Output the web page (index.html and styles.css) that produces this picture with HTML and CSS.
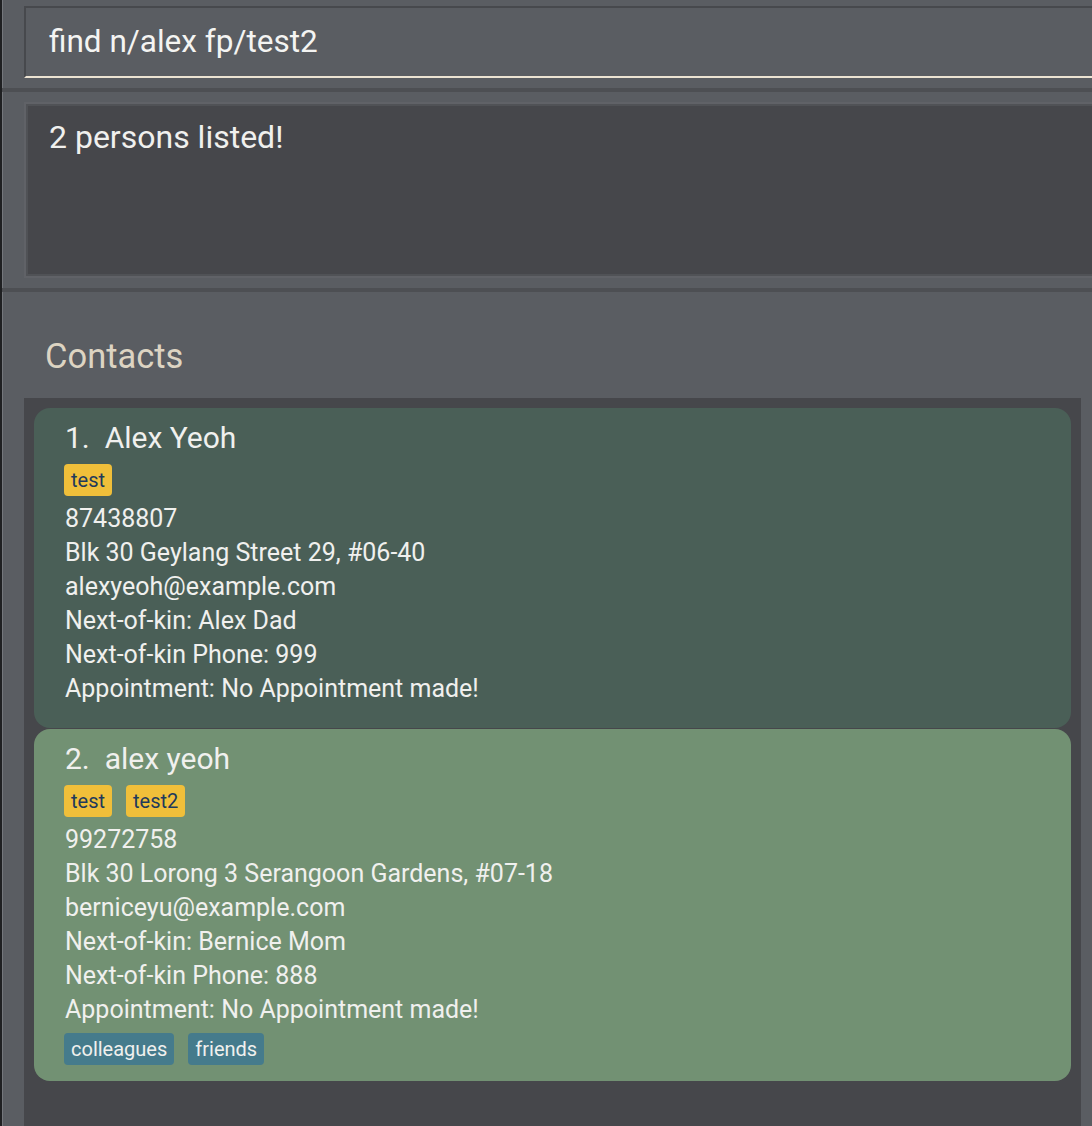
FILE: index.html
```html
<!DOCTYPE html>
<html>
<head>
<meta charset="utf-8">
<link rel="stylesheet" href="styles.css">
</head>
<body>
<div class="window">
  <section class="command-pane">
    <div class="command-box">find n/alex fp/test2</div>
  </section>
  <div class="divider"></div>
  <section class="result-pane">
    <div class="result-box">2 persons listed!</div>
  </section>
  <div class="divider"></div>
  <section class="list-pane">
    <h2 class="list-title">Contacts</h2>
    <div class="list">
      <div class="card card-dark">
        <div class="card-name">1.&nbsp; Alex Yeoh</div>
        <div class="tags">
          <span class="tag tag-yellow">test</span>
        </div>
        <div class="field">87438807</div>
        <div class="field">Blk 30 Geylang Street 29, #06-40</div>
        <div class="field">alexyeoh@example.com</div>
        <div class="field">Next-of-kin: Alex Dad</div>
        <div class="field">Next-of-kin Phone: 999</div>
        <div class="field">Appointment: No Appointment made!</div>
        <div class="tags tags-bottom"></div>
      </div>
      <div class="card card-light">
        <div class="card-name">2.&nbsp; alex yeoh</div>
        <div class="tags">
          <span class="tag tag-yellow">test</span>
          <span class="tag tag-yellow">test2</span>
        </div>
        <div class="field">99272758</div>
        <div class="field">Blk 30 Lorong 3 Serangoon Gardens, #07-18</div>
        <div class="field">berniceyu@example.com</div>
        <div class="field">Next-of-kin: Bernice Mom</div>
        <div class="field">Next-of-kin Phone: 888</div>
        <div class="field">Appointment: No Appointment made!</div>
        <div class="tags tags-bottom">
          <span class="tag tag-blue">colleagues</span>
          <span class="tag tag-blue">friends</span>
        </div>
      </div>
    </div>
  </section>
</div>
</body>
</html>
```

FILE: styles.css
```css
html, body {
  margin: 0;
  padding: 0;
  height: 100%;
  overflow: hidden;
}

body {
  background: #5a5d62;
  font-family: Roboto, "Noto Sans", sans-serif;
  color: #f0f0ee;
}

.window {
  height: 100%;
  display: flex;
  flex-direction: column;
  border-left: 2px solid #1f2022;
  box-shadow: inset 1px 0 0 #74777c;
  box-sizing: border-box;
}

.command-pane {
  padding: 6px 0 10px 22px;
}

.command-box {
  height: 68px;
  border-top: 2px solid #47494d;
  border-left: 2px solid #47494d;
  border-bottom: 2px solid #ece3d2;
  padding-left: 23px;
  font-size: 31.5px;
  line-height: 68px;
  color: #f4f4f2;
  white-space: nowrap;
}

.divider {
  height: 4px;
  background: #4d4f53;
  flex: none;
}

.result-pane {
  padding: 10px 0 10px 22px;
}

.result-box {
  height: 172px;
  box-sizing: border-box;
  background: #46474b;
  border: 2px solid #505256;
  border-right: none;
  box-shadow: 0 0 0 2px #606267;
  margin: 2px 0 2px 2px;
  padding: 12px 0 0 21px;
  font-size: 32px;
  line-height: 38px;
}

.list-pane {
  flex: 1;
  display: flex;
  flex-direction: column;
  padding-left: 22px;
  padding-right: 11px;
  min-height: 0;
}

.list-title {
  margin: 0;
  height: 106px;
  box-sizing: border-box;
  padding: 44px 0 0 21px;
  font-size: 34.5px;
  font-weight: 400;
  line-height: 40px;
  color: #ddd4c2;
}

.list {
  flex: 1;
  background: #46474b;
  padding: 10px;
  display: flex;
  flex-direction: column;
  gap: 1px;
}

.card {
  border-radius: 16px;
  padding: 10px 20px 16px 31px;
}

.card-dark {
  background: #4a5f57;
}

.card-light {
  background: #729173;
}

.card-name {
  font-size: 30px;
  line-height: 40px;
  white-space: nowrap;
}

.tags {
  display: flex;
  gap: 14px;
  margin-top: 6px;
  margin-left: -1px;
}

.tags + .field {
  margin-top: 6px;
}

.tags-bottom {
  margin-top: 6px;
}

.tag {
  display: inline-block;
  height: 32px;
  line-height: 32px;
  padding: 0 7px;
  border-radius: 4px;
  font-size: 20px;
}

.tag-yellow {
  background: #f0bf3a;
  color: #1f3a5c;
}

.tag-blue {
  background: #457b8c;
  color: #f0f0ee;
}

.field {
  font-size: 25px;
  line-height: 34px;
  white-space: nowrap;
}
```
